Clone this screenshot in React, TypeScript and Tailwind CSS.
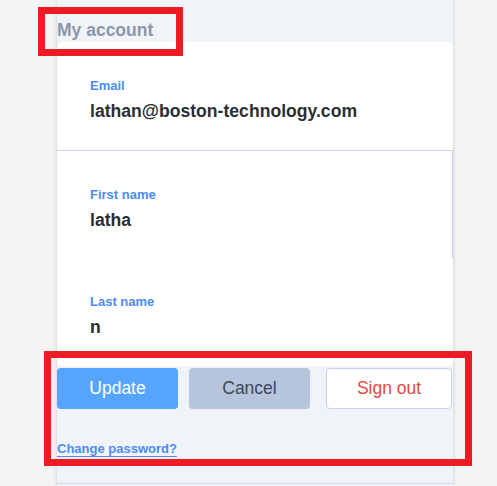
import React from "react";

const font = { fontFamily: '"Liberation Sans", Arial, sans-serif' };

function Field({ label, value, boxed }: { label: string; value: string; boxed?: boolean }) {
  return (
    <div
      className={
        "h-[108px] pl-[33px] pt-[36px] flex flex-col " +
        (boxed ? "border-t border-r border-[#c9d5ea]" : "")
      }
    >
      <div className="text-[13px] leading-[16px] font-bold text-[#4b8cf5]">{label}</div>
      <div className="mt-[5px] text-[17.6px] leading-[24px] font-bold text-[#2b2e33]">{value}</div>
    </div>
  );
}

export default function App() {
  return (
    <div className="relative w-[497px] h-[486px] bg-[#f4f4f4] overflow-hidden" style={font}>
      <div className="ml-[57px] w-[396px] h-[486px] bg-[#f0f3f7] shadow-[0_0_4px_rgba(0,0,0,0.18)] flex flex-col">
        <div className="pt-[18px] h-[42px] text-[17.5px] leading-[24px] font-bold text-[#8a97a9]">
          My account
        </div>
        <div className="bg-white rounded-md flex flex-col">
          <Field label="Email" value="lathan@boston-technology.com" />
          <Field label="First name" value="latha" boxed />
          <Field label="Last name" value="n" />
        </div>
        <div className="mt-[2px] flex">
          <button className="w-[121px] h-[41px] rounded bg-[#54a5fb] text-white text-[17.5px]">
            Update
          </button>
          <button className="ml-[11px] w-[121px] h-[41px] rounded bg-[#b6c4dc] text-[#3c4858] text-[17.5px]">
            Cancel
          </button>
          <button className="ml-[16px] w-[126px] h-[41px] rounded bg-white border border-[#c5d3ea] text-[#e8473d] text-[17.5px]">
            Sign out
          </button>
        </div>
        <div className="mt-[31px] leading-[16px]">
          <a className="text-[13px] font-bold text-[#4b8cf5] underline underline-offset-[3px] cursor-pointer">
            Change password?
          </a>
        </div>
        <div className="mt-[26px] border-t border-[#ccd6e6]" />
      </div>

      <div className="absolute left-[38px] top-[7px] w-[145px] h-[49px] border-[7px] border-[#ed1c24] pointer-events-none" />
      <div className="absolute left-[44px] top-[351px] w-[428px] h-[115px] border-[7px] border-[#ed1c24] pointer-events-none" />
    </div>
  );
}
